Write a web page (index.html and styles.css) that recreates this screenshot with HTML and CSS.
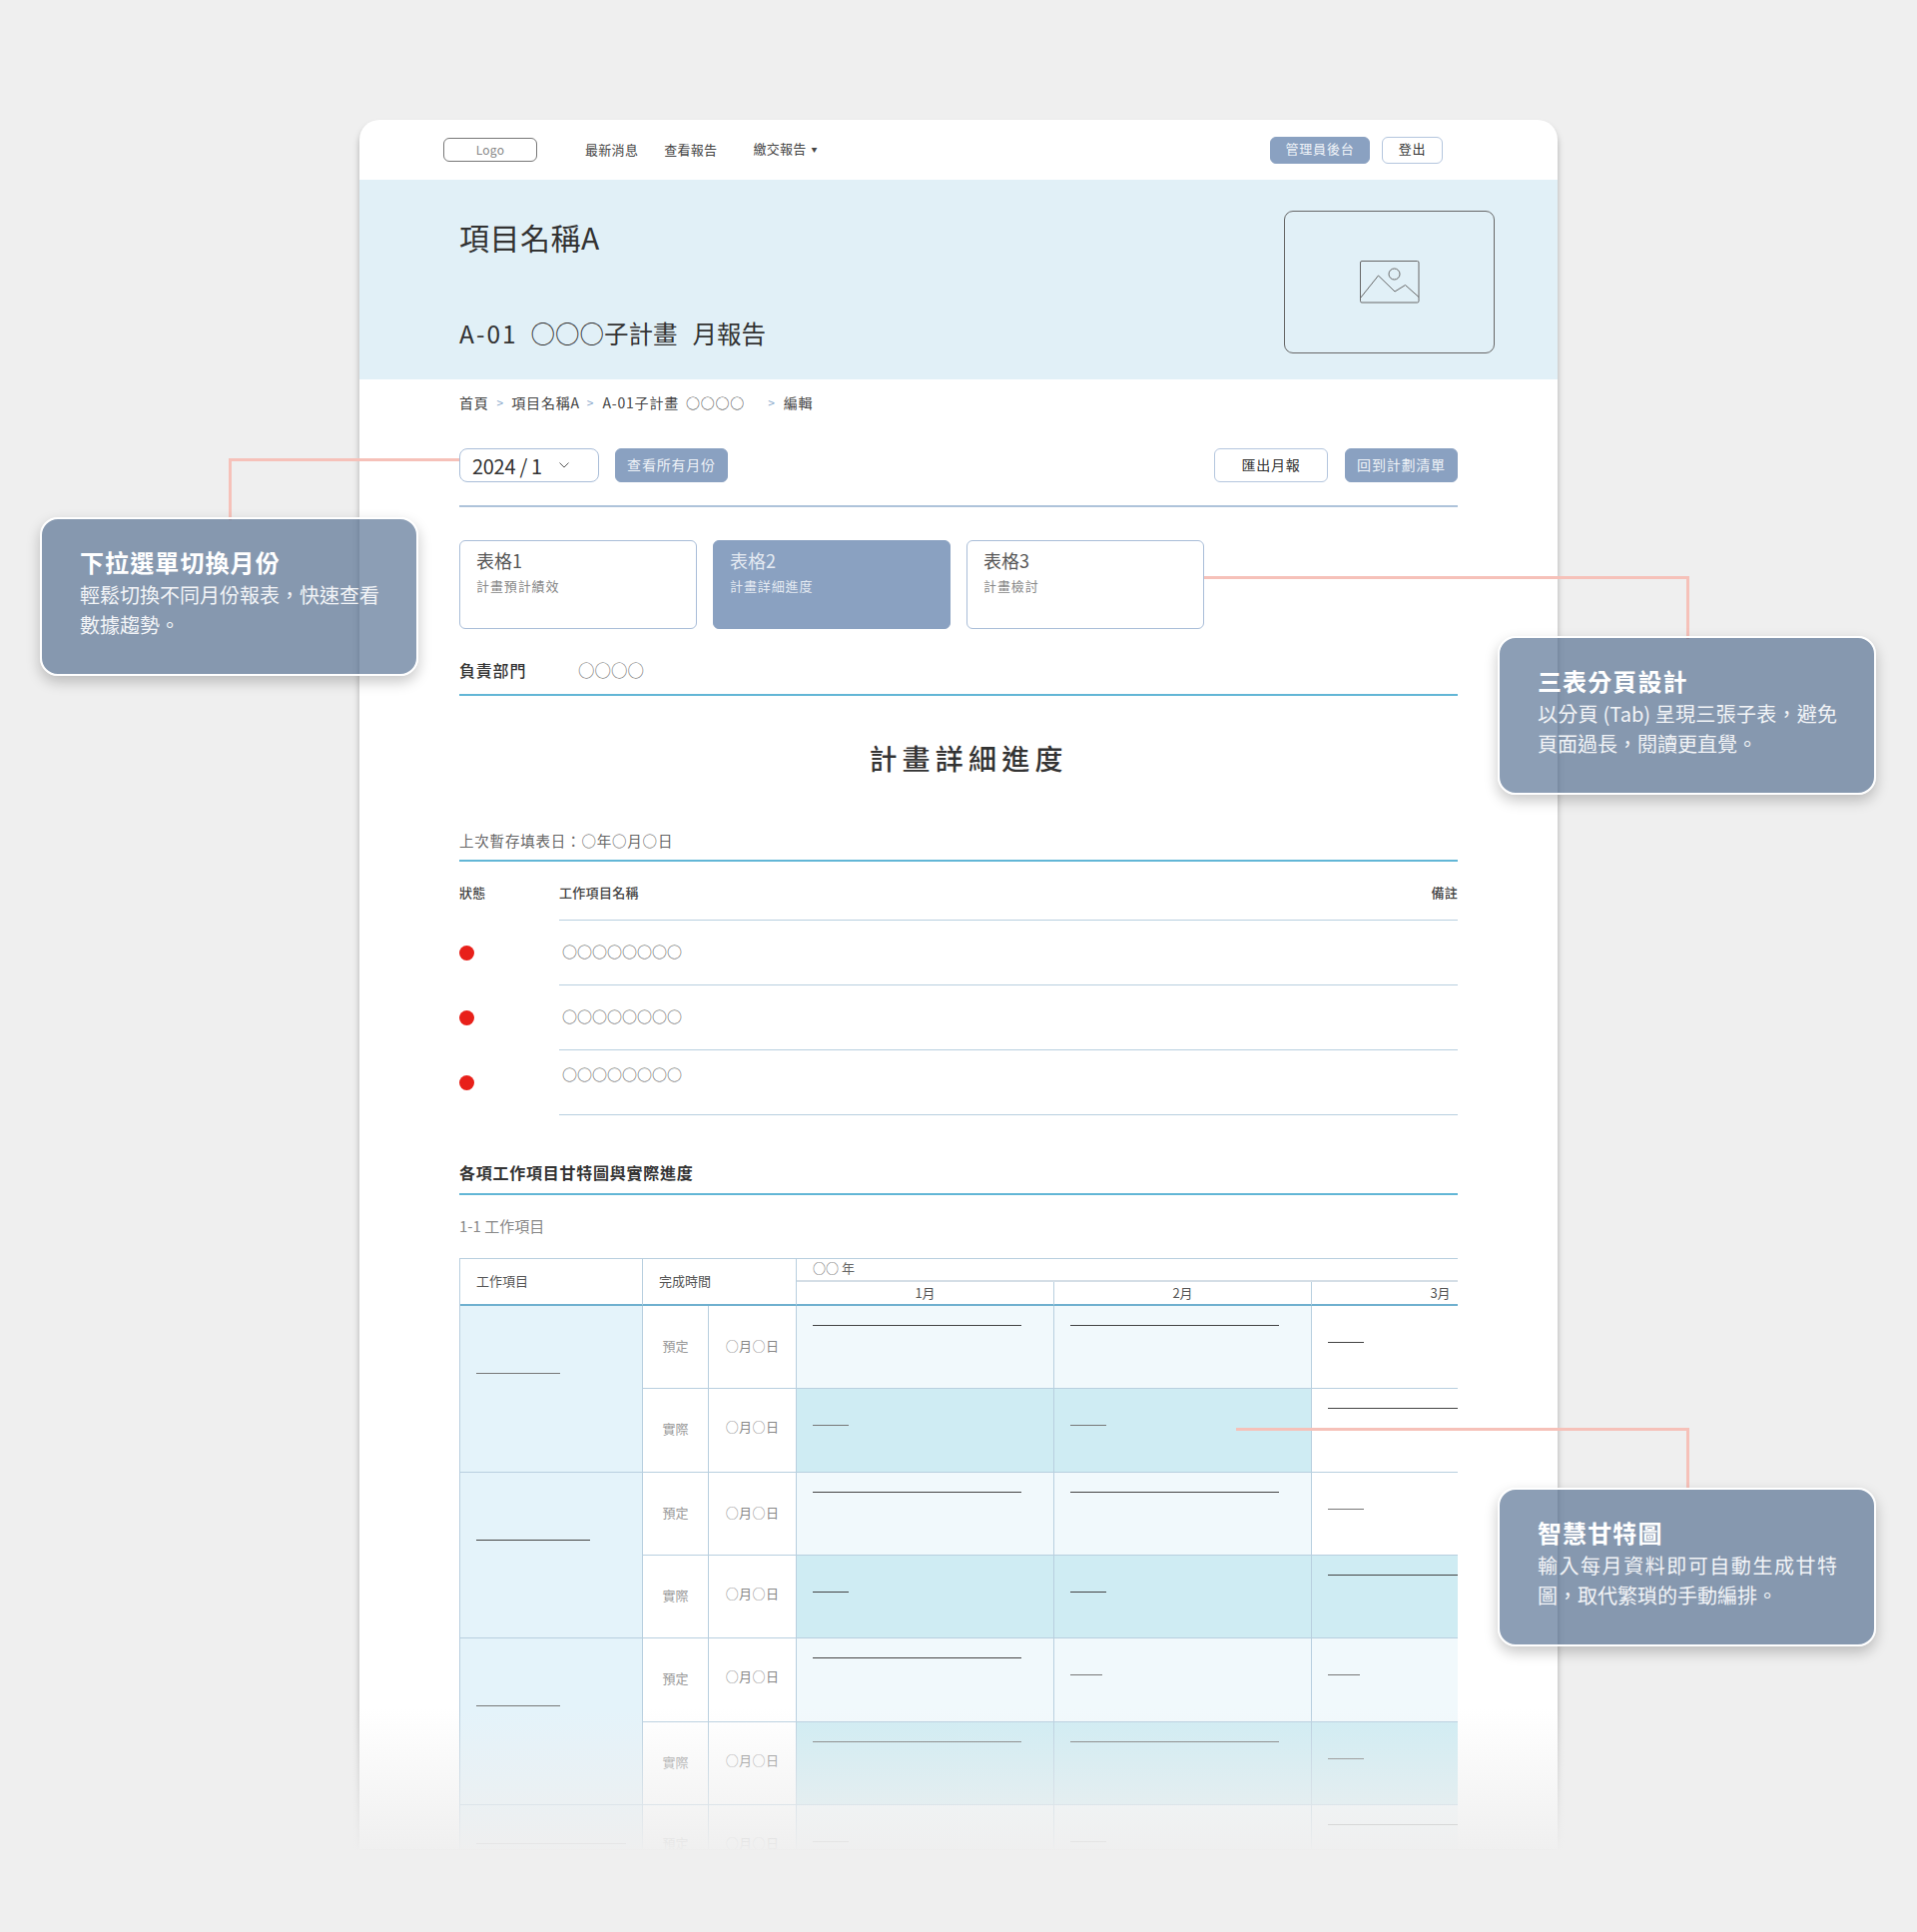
FILE: index.html
```html
<!DOCTYPE html>
<html lang="zh-Hant">
<head>
<meta charset="utf-8">
<title>月報告</title>
<link rel="stylesheet" href="styles.css">
</head>
<body>
<div class="stage">
  <div class="card">
    <header class="nav">
      <div class="logo">Logo</div>
      <a class="nav-link nl-1">最新消息</a>
      <a class="nav-link nl-2">查看報告</a>
      <a class="nav-link nl-3">繳交報告<span class="caret">▼</span></a>
      <div class="nav-right">
        <button class="btn btn-fill btn-admin">管理員後台</button>
        <button class="btn btn-line btn-logout">登出</button>
      </div>
    </header>
    <section class="hero">
      <div class="hero-text">
        <h1 class="hero-title">項目名稱A</h1>
        <h2 class="hero-sub"><span class="sub-code">A-01</span>○○○子計畫<span class="sub-end">月報告</span></h2>
      </div>
      <div class="hero-img">
        <svg class="img-icon" width="60" height="44" viewBox="0 0 60 44" fill="none" stroke="#666" stroke-width="1">
          <rect x="0.5" y="0.5" width="58.5" height="41.5" rx="1.5"/>
          <circle cx="34.5" cy="13.5" r="5.5"/>
          <path d="M0.5 37.5 L18.5 15 L35 31 L45.5 24.5 L59 36.5"/>
        </svg>
      </div>
    </section>
    <main class="main">
      <nav class="crumbs">
        <span>首頁</span><i class="sep s1">&gt;</i><span>項目名稱A</span><i class="sep s2">&gt;</i><span>A-01子計畫 <span class="crumb-o">○○○○</span></span><i class="sep s3">&gt;</i><span>編輯</span>
      </nav>
      <div class="toolbar">
        <div class="select"><span class="select-val">2024 / 1</span>
          <svg width="10" height="6" viewBox="0 0 10 6" fill="none" stroke="#555" stroke-width="1"><path d="M0.5 0.5 L5 5 L9.5 0.5"/></svg>
        </div>
        <button class="btn btn-fill btn-months">查看所有月份</button>
        <button class="btn btn-line btn-export">匯出月報</button>
        <button class="btn btn-fill btn-back">回到計劃清單</button>
      </div>
      <div class="tabs">
        <div class="tab"><div class="tab-title">表格1</div><div class="tab-sub">計畫預計績效</div></div>
        <div class="tab tab-on"><div class="tab-title">表格2</div><div class="tab-sub">計畫詳細進度</div></div>
        <div class="tab"><div class="tab-title">表格3</div><div class="tab-sub">計畫檢討</div></div>
      </div>
      <div class="dept"><span class="dept-label">負責部門</span><span class="dept-val">○○○○</span></div>
      <h2 class="page-title">計畫詳細進度</h2>
      <div class="saved">上次暫存填表日：○年○月○日</div>
      <div class="list-head">
        <div class="lh-status">狀態</div>
        <div class="lh-main"><span>工作項目名稱</span><span>備註</span></div>
      </div>
      <div class="list-row"><div class="dot-cell"><span class="dot"></span></div><div class="name">○○○○○○○○</div></div>
      <div class="list-row"><div class="dot-cell"><span class="dot"></span></div><div class="name">○○○○○○○○</div></div>
      <div class="list-row"><div class="dot-cell"><span class="dot"></span></div><div class="name name-top">○○○○○○○○</div></div>
      <h3 class="section">各項工作項目甘特圖與實際進度</h3>
      <div class="sub-label">1-1 工作項目</div>

      <div class="gantt-wrap">
        <div class="gantt">
          <div class="c h-item">工作項目</div>
          <div class="c h-done">完成時間</div>
          <div class="c h-year">○○ 年</div>
          <div class="c h-month">1月</div>
          <div class="c h-month">2月</div>
          <div class="c h-month">3月</div>

          <div class="c item span2"><div class="bar w84 soft"></div></div>
          <div class="c lab">預定</div><div class="c date">○月○日</div>
          <div class="c plan top"><div class="bar w209"></div></div>
          <div class="c plan top"><div class="bar w209"></div></div>
          <div class="c blank mid"><div class="bar w36"></div></div>

          <div class="c lab">實際</div><div class="c date up">○月○日</div>
          <div class="c real mid"><div class="bar w36 soft"></div></div>
          <div class="c real mid"><div class="bar w36 soft"></div></div>
          <div class="c blank top"><div class="bar w209"></div></div>

          <div class="c item span2"><div class="bar w114"></div></div>
          <div class="c lab">預定</div><div class="c date">○月○日</div>
          <div class="c plan top"><div class="bar w209"></div></div>
          <div class="c plan top"><div class="bar w209"></div></div>
          <div class="c blank mid"><div class="bar w36 soft"></div></div>

          <div class="c lab">實際</div><div class="c date up">○月○日</div>
          <div class="c real mid"><div class="bar w36"></div></div>
          <div class="c real mid"><div class="bar w36"></div></div>
          <div class="c real top"><div class="bar w209"></div></div>

          <div class="c item span2"><div class="bar w84 soft"></div></div>
          <div class="c lab">預定</div><div class="c date up">○月○日</div>
          <div class="c plan top"><div class="bar w209"></div></div>
          <div class="c plan mid"><div class="bar w32 soft"></div></div>
          <div class="c plan mid"><div class="bar w32 soft"></div></div>

          <div class="c lab">實際</div><div class="c date up">○月○日</div>
          <div class="c real top"><div class="bar w209 soft"></div></div>
          <div class="c real top"><div class="bar w209 soft"></div></div>
          <div class="c real mid"><div class="bar w36 soft"></div></div>

          <div class="c item span2 item-last"><div class="bar w150 soft"></div></div>
          <div class="c lab lab-last">預定</div><div class="c date date-last">○月○日</div>
          <div class="c plan mid"><div class="bar w36 soft"></div></div>
          <div class="c plan mid"><div class="bar w36 soft"></div></div>
          <div class="c plan top"><div class="bar w209 soft"></div></div>
        </div>
      </div>
    </main>
  </div>

  <div class="fade"></div>

  <div class="conn conn-a"></div>
  <div class="conn conn-b"></div>
  <div class="conn conn-c"></div>

  <aside class="note note-a">
    <div class="note-title">下拉選單切換月份</div>
    <p class="note-body">輕鬆切換不同月份報表，快速查看數據趨勢。</p>
  </aside>
  <aside class="note note-b">
    <div class="note-title">三表分頁設計</div>
    <p class="note-body">以分頁 (Tab) 呈現三張子表，避免頁面過長，閱讀更直覺。</p>
  </aside>
  <aside class="note note-c">
    <div class="note-title">智慧甘特圖</div>
    <p class="note-body">輸入每月資料即可自動生成甘特圖，取代繁瑣的手動編排。</p>
  </aside>
</div>
</body>
</html>
```
FILE: styles.css
```css
* { box-sizing: border-box; }
html, body { margin: 0; padding: 0; }
body {
  background: #efefef;
  font-family: "Noto Sans CJK TC", "Noto Sans", sans-serif;
  color: #333;
}
h1, h2, h3, p { margin: 0; font-weight: 400; }
button { font-family: inherit; padding: 0; cursor: pointer; }

.stage { position: relative; width: 1920px; height: 1935px; padding-top: 120px; overflow: hidden; }
.card {
  width: 1200px; height: 1732px; margin: 0 auto;
  background: #fff; border-radius: 20px 20px 0 0; overflow: hidden;
  box-shadow: 0 5px 6px rgba(0,0,0,.28);
}

/* nav */
.nav { height: 60px; display: flex; align-items: center; padding: 0 115px 0 84px; }
.logo {
  width: 94px; height: 24px; border: 1px solid #777; border-radius: 6px;
  display: flex; align-items: center; justify-content: center;
  font-size: 12px; line-height: 20px; padding-bottom: 1px; color: #888; letter-spacing: .3px;
}
.nav-link { font-size: 13px; line-height: 20px; letter-spacing: .3px; color: #444; white-space: nowrap; margin-top: -1px; }
.nl-1 { margin-left: 48px; }
.nl-2 { margin-left: 26px; }
.nl-3 { margin-left: 36px; }
.caret { font-size: 6px; margin-left: 5px; vertical-align: 2px; }
.nav-right { margin-left: auto; display: flex; gap: 12px; }

.btn { border-radius: 6px; font-size: 14px; line-height: 20px; letter-spacing: .8px; display: block; padding-bottom: 2px; }
.btn-fill { background: #8aa1c1; border: 1px solid #8aa1c1; color: #eef2f7; }
.btn-line { background: #fff; border: 1px solid #b4c6de; color: #333; }
.btn-admin { width: 100px; height: 27px; font-size: 13px; }
.btn-logout { width: 61px; height: 27px; font-size: 13px; }

/* hero */
.hero { height: 200px; background: #e1f0f7; display: flex; justify-content: space-between; padding: 0 63px 0 100px; }
.hero-title { font-size: 30px; line-height: 40px; margin-top: 37px; letter-spacing: .5px; color: #333; }
.hero-sub { font-size: 24.5px; line-height: 36px; margin-top: 59px; color: #333; white-space: nowrap; }
.sub-code { letter-spacing: 2px; margin-right: 13px; }
.sub-end { margin-left: 15px; }
.hero-img {
  width: 211px; height: 143px; margin-top: 31px; border: 1px solid #666; border-radius: 9px;
  display: flex; align-items: center; justify-content: center;
}

/* main */
.main { padding: 0 100px; }
.crumbs { margin-top: 13px; font-size: 14px; line-height: 20px; letter-spacing: .8px; color: #444; display: flex; white-space: nowrap; }
.crumb-o { margin-left: 3px; }
.sep { font-style: normal; color: #8aa9cc; font-size: 12px; letter-spacing: 0; }
.s1 { margin: 0 8px 0 8px; }
.s2 { margin: 0 9px 0 7px; }
.s3 { margin: 0 9px 0 23px; }

.toolbar { margin-top: 36px; padding-bottom: 23px; border-bottom: 2px solid #aec3da; height: 59px; display: flex; align-items: flex-start; }
.select {
  width: 140px; height: 34px; border: 1px solid #a9bdd8; border-radius: 8px;
  display: flex; align-items: center; padding-left: 12px;
}
.select-val { font-size: 20px; width: 87px; letter-spacing: -.3px; color: #333; }
.btn-months { width: 113px; height: 34px; margin-left: 16px; }
.btn-export { width: 114px; height: 34px; margin-left: auto; }
.btn-back { width: 113px; height: 34px; margin-left: 17px; }

.tabs { margin-top: 33px; display: flex; gap: 16px; }
.tab { width: 238px; height: 89px; border: 1px solid #a9bdd8; border-radius: 6px; padding: 6px 16px; background: #fff; }
.tab-on { background: #8aa1c1; border-color: #8aa1c1; }
.tab-title { font-size: 18px; line-height: 26px; color: #555; }
.tab-sub { font-size: 13px; line-height: 20px; margin-top: 3px; letter-spacing: .9px; color: #888; }
.tab-on .tab-title, .tab-on .tab-sub { color: #e4eaf2; }

.dept { margin-top: 17px; height: 50px; padding-bottom: 1px; border-bottom: 2px solid #62b6d6; display: flex; align-items: center; }
.dept-label { font-size: 16px; font-weight: 500; width: 119px; letter-spacing: .8px; color: #333; }
.dept-val { font-size: 16.5px; color: #777; }

.page-title { margin-top: 42px; font-size: 28px; font-weight: 500; line-height: 40px; letter-spacing: 5.2px; text-align: center; color: #333; padding-left: 20px; }

.saved { margin-top: 53px; padding-bottom: 9px; line-height: 20px; font-size: 14.5px; letter-spacing: .8px; color: #666; border-bottom: 2px solid #62b6d6; height: 31px; }

.list-head { margin-top: 21px; display: flex; font-size: 13px; line-height: 20px; letter-spacing: .3px; font-weight: 500; color: #444; }
.lh-status { width: 100px; }
.lh-main { flex: 1; display: flex; justify-content: space-between; padding-bottom: 17px; border-bottom: 1px solid #b8cfdf; }
.list-row { display: flex; }
.dot-cell { width: 100px; display: flex; align-items: center; }
.dot { width: 15px; height: 15px; border-radius: 50%; background: #e8201a; }
.name { flex: 1; height: 65px; border-bottom: 1px solid #b8cfdf; font-size: 15px; line-height: 20px; padding: 21px 0 0 3px; color: #666; }
.name-top { padding-top: 14px; }

.section { margin-top: 45px; padding-bottom: 9px; border-bottom: 2px solid #62b6d6; height: 35px; font-size: 16px; font-weight: 700; line-height: 24px; letter-spacing: .75px; color: #333; }
.sub-label { margin-top: 21px; font-size: 15px; line-height: 20px; color: #888; }

/* gantt */
.gantt-wrap { margin-top: 22px; width: 1000px; overflow: hidden; }
.gantt {
  width: 1112px; display: grid;
  grid-template-columns: 183px 66px 88px 258px 258px 258px;
  grid-template-rows: 23px 24px repeat(8, 83.33px);
  border-top: 1px solid #b8cfdf; border-left: 1px solid #b8cfdf;
}
.c { border-right: 1px solid #b8cfdf; border-bottom: 1px solid #b8cfdf; font-size: 13px; color: #555; }
.h-item { grid-row: span 2; display: flex; align-items: center; padding: 0 0 2px 16px; border-bottom: 2px solid #6fb0cf; }
.h-done { grid-row: span 2; grid-column: span 2; display: flex; align-items: center; padding: 0 0 2px 16px; border-bottom: 2px solid #6fb0cf; }
.h-year { grid-column: span 3; padding-left: 16px; line-height: 18px; border-bottom: 2px solid #d4dee6; border-right: 0; color: #666; }
.h-month { text-align: center; line-height: 22px; border-bottom: 2px solid #6fb0cf; }
.item { background: #e4f3fa; padding: 67px 0 0 16px; }
.span2 { grid-row: span 2; }
.item-last { padding-top: 38px; }
.lab, .date { display: flex; align-items: center; justify-content: center; background: #fff; color: #999; padding-bottom: 3px; }
.date { color: #888; padding-bottom: 3px; letter-spacing: .4px; }
.up { padding-bottom: 7px; }
.lab-last, .date-last { padding-bottom: 8px; }
.plan { background: #f1f9fc; }
.real { background: #cfecf3; }
.blank { background: #fff; }
.top { padding: 19px 0 0 16px; }
.mid { padding: 36px 0 0 16px; }
.bar { height: 1px; background: #444; }
.soft { background: #777; }
.w32 { width: 32px; }
.w36 { width: 36px; }
.w84 { width: 84px; }
.w114 { width: 114px; }
.w150 { width: 150px; }
.w209 { width: 209px; }

/* overlays */
.fade {
  position: absolute; left: 0; right: 0; top: 1712px; height: 155px;
  background: linear-gradient(to bottom, rgba(239,239,239,0) 0, rgba(239,239,239,.96) 140px, rgba(239,239,239,1) 141px);
}
.conn { position: absolute; border: 0 solid #f6c1b9; }
.conn-a { left: 229px; top: 459px; width: 231px; height: 62px; border-top-width: 3px; border-left-width: 3px; }
.conn-b { left: 1206px; top: 577px; width: 486px; height: 63px; border-top-width: 3px; border-right-width: 3px; }
.conn-c { left: 1238px; top: 1430px; width: 454px; height: 62px; border-top-width: 3px; border-right-width: 3px; }

.note {
  position: absolute; width: 379px; height: 159px; padding: 28px 37px 0 38px;
  background: rgba(64,93,131,.6); border: 2px solid #fff; border-radius: 18px;
  box-shadow: 0 6px 14px rgba(0,0,0,.22); color: #fff;
}
.note-a { left: 40px; top: 518px; }
.note-b { left: 1500px; top: 637px; }
.note-c { left: 1500px; top: 1490px; }
.note-title { font-size: 24px; font-weight: 700; line-height: 30px; letter-spacing: 1.1px; margin-bottom: 3px; }
.note-body { font-size: 20px; line-height: 30px; color: #f2f4f7; text-align: justify; }
```
